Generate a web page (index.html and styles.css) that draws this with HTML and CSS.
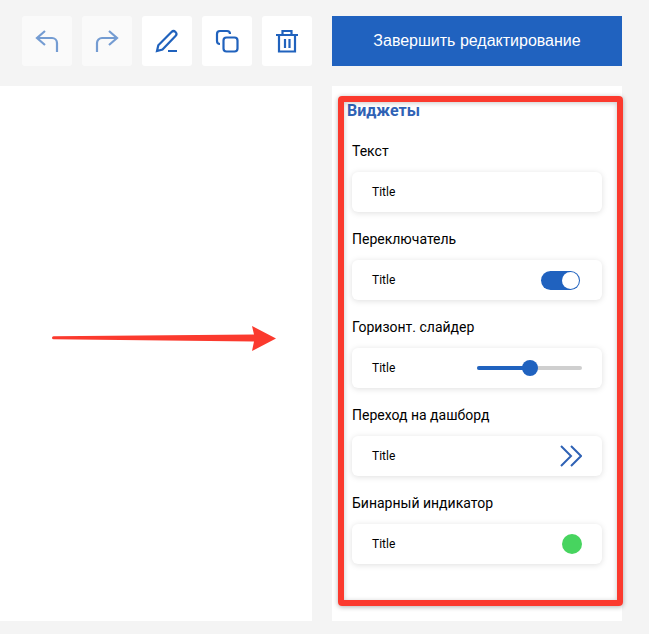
FILE: index.html
```html
<!DOCTYPE html>
<html lang="en">
<head>
  <meta charset="UTF-8" />
  <meta name="viewport" content="width=device-width, initial-scale=1.0"/>
  <title>Редактирование дашборда</title>
  <link rel="stylesheet" href="styles.css">
</head>
<body>

  <div class="toolbar">
    <div class="tool-group">
      <button type="button" class="tool-btn" disabled>
        <svg class="icon" viewBox="0 0 24 24"><path d="M10 2 2 9l8 7M2 9h15a5 5 0 0 1 5 5v9"/></svg>
      </button>
      <button type="button" class="tool-btn" disabled>
        <svg class="icon" viewBox="0 0 24 24"><path d="m14 2 8 7-8 7M22 9H7a5 5 0 0 0-5 5v9"/></svg>
      </button>
      <button type="button" class="tool-btn">
        <svg class="icon" viewBox="0 0 24 24"><path d="m2 22 1.300-5.700L16.500 3a2.800 2.800 0 0 1 4 4L7.500 20.500zM13 22h9"/></svg>
      </button>
      <button type="button" class="tool-btn">
        <svg class="icon" viewBox="0 0 24 24">
          <rect x="8.500" y="8.500" width="14" height="14" rx="3"/>
          <path d="M5 15a3 3 0 0 1-3-3V5a3 3 0 0 1 3-3h7a3 3 0 0 1 3 3"/>
        </svg>
      </button>
      <button type="button" class="tool-btn">
        <svg class="icon" viewBox="0 0 24 24"><path d="M1 6h22M7.500 6V2h9v4M4 6v16.500h16V6M10 10v9M14.500 10v9"/></svg>
      </button>
    </div>
    <button type="button" class="finish-btn">Завершить редактирование</button>
  </div>

  <div class="workspace">
    <div class="canvas">
      <!-- annotation arrow -->
      <svg class="arrow" viewBox="0 0 226 28">
        <path d="M2.500 11.300 203 9.500 201 1 225 13.500 201 26 203 16.500 2.500 14.300a1.500 1.500 0 0 1 0-3z"/>
      </svg>
    </div>

    <div class="panel">
      <div class="panel-title">Виджеты</div>

      <div class="widget-list">
        <div class="widget">
          <div class="widget-label">Текст</div>
          <div class="widget-card"><span>Title</span></div>
        </div>

        <div class="widget">
          <div class="widget-label">Переключатель</div>
          <div class="widget-card">
            <span>Title</span>
            <div class="toggle"><div class="toggle-knob"></div></div>
          </div>
        </div>

        <div class="widget">
          <div class="widget-label">Горизонт. слайдер</div>
          <div class="widget-card">
            <span>Title</span>
            <div class="slider">
              <div class="slider-fill"></div>
              <div class="slider-knob"></div>
            </div>
          </div>
        </div>

        <div class="widget">
          <div class="widget-label">Переход на дашборд</div>
          <div class="widget-card">
            <span>Title</span>
            <svg class="chevrons" viewBox="0 0 22 22"><path d="m1 1 10 10L1 21M11 1l10 10-10 10"/></svg>
          </div>
        </div>

        <div class="widget">
          <div class="widget-label">Бинарный индикатор</div>
          <div class="widget-card">
            <span>Title</span>
            <div class="indicator"></div>
          </div>
        </div>
      </div>

      <!-- annotation frame -->
      <div class="highlight"></div>
    </div>
  </div>

</body>
</html>
```

FILE: styles.css
```css
body {
  margin: 0;
  height: 634px;
  overflow: hidden;
  font-family: 'Roboto', sans-serif;
  background: #f4f4f4;
  color: #000;
}

.toolbar {
  display: flex;
  gap: 20px;
  padding: 16px 27px 20px 22px;
}

.tool-group {
  display: flex;
  gap: 10px;
}

.tool-btn {
  display: flex;
  align-items: center;
  justify-content: center;
  width: 50px;
  height: 50px;
  padding: 0;
  border: none;
  border-radius: 3px;
  background: #fff;
}

.tool-btn:disabled {
  opacity: 0.6;
}

.icon {
  width: 24px;
  height: 24px;
  fill: none;
  stroke: #2062bd;
  stroke-width: 2.200;
}

.finish-btn {
  flex: 1;
  height: 50px;
  padding: 0;
  border: none;
  background: #2062bf;
  color: #fff;
  font-family: 'Liberation Sans', sans-serif;
  font-size: 16px;
}

.workspace {
  display: flex;
  gap: 20px;
  height: 535px;
  padding-right: 27px;
}

.canvas {
  position: relative;
  width: 312px;
  background: #fff;
}

.arrow {
  position: absolute;
  left: 51px;
  top: 239px;
  width: 226px;
  height: 28px;
  fill: #fb3a2e;
}

.panel {
  position: relative;
  flex: 1;
  padding: 15px 20px 0 15px;
  background: #fff;
}

.panel-title {
  margin-bottom: 20px;
  font-size: 16px;
  font-weight: bold;
  line-height: 20px;
  color: #2f62b5;
}

.widget-list {
  display: flex;
  flex-direction: column;
  gap: 17px;
  margin-left: 5px;
}

.widget-label {
  margin-bottom: 11px;
  font-size: 14px;
  line-height: 20px;
}

.widget-card {
  display: flex;
  align-items: center;
  justify-content: space-between;
  height: 40px;
  padding: 0 20px;
  border-radius: 6px;
  background: #fff;
  box-shadow: 0 1px 6px rgba(0, 0, 0, 0.13);
  font-size: 12px;
}

.toggle {
  display: flex;
  justify-content: flex-end;
  align-items: center;
  width: 39px;
  height: 19px;
  margin-right: 2px;
  padding-right: 1px;
  box-sizing: border-box;
  border-radius: 10px;
  background: #2062bf;
}

.toggle-knob {
  width: 17px;
  height: 17px;
  border-radius: 50%;
  background: #fff;
}

.slider {
  position: relative;
  width: 105px;
  height: 4px;
  border-radius: 2px;
  background: #cfcfcf;
}

.slider-fill {
  width: 53px;
  height: 4px;
  border-radius: 2px;
  background: #2062bf;
}

.slider-knob {
  position: absolute;
  left: 45px;
  top: -6px;
  width: 16px;
  height: 16px;
  border-radius: 50%;
  background: #2062bf;
}

.chevrons {
  width: 22px;
  height: 22px;
  fill: none;
  stroke: #2f62b5;
  stroke-width: 2;
}

.indicator {
  width: 20px;
  height: 20px;
  border-radius: 50%;
  background: #47d45f;
}

.highlight {
  position: absolute;
  left: 6px;
  top: 10px;
  width: 285px;
  height: 510px;
  box-sizing: border-box;
  border: 6px solid #fb3a2e;
  border-radius: 4px;
  box-shadow: 0 1px 5px rgba(0, 0, 0, 0.3), inset 0 1px 5px rgba(0, 0, 0, 0.22);
}
```
